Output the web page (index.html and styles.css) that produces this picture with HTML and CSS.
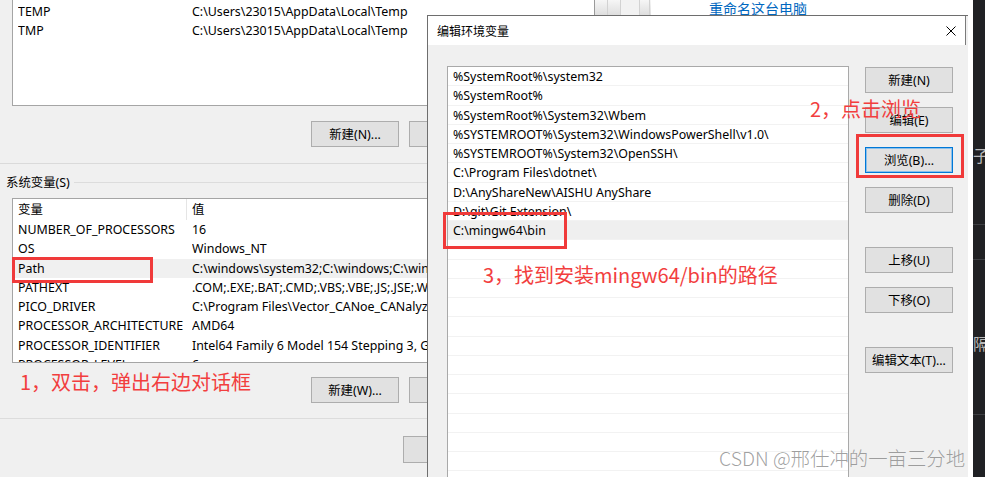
FILE: index.html
```html
<!DOCTYPE html>
<html lang="zh-CN">
<head>
    <meta charset="UTF-8">
    <meta name="viewport" content="width=device-width, initial-scale=1.0">
    <title>编辑环境变量</title>
    <link rel="stylesheet" href="styles.css">
</head>
<body>
    <div class="desktop">
        <div class="settings">
            <div class="chrome-strip">
                <span></span><span></span><span></span><span></span>
            </div>
            <div class="settings-main">
                <a class="settings-link">重命名这台电脑</a>
            </div>
            <div class="dark-pane">
                <div class="dark-text first">子配</div>
                <div class="dark-line first-line"></div>
                <div class="dark-line second-line"></div>
                <div class="dark-text second">隔</div>
                <div class="dark-line third-line"></div>
            </div>
        </div>

        <div class="env-window">
            <div class="list user-list">
                <div class="list-row"><span>TEMP</span><span>C:\Users\23015\AppData\Local\Temp</span></div>
                <div class="list-row"><span>TMP</span><span>C:\Users\23015\AppData\Local\Temp</span></div>
            </div>
            <div class="button-row">
                <button class="btn">新建(N)...</button>
                <button class="btn">编辑(E)...</button>
            </div>
            <div class="divider"></div>
            <div class="group-title">
                <span>系统变量(S)</span>
                <div class="group-line"></div>
            </div>
            <div class="list sys-list">
                <div class="list-head"><span>变量</span><span>值</span></div>
                <div class="list-row"><span>NUMBER_OF_PROCESSORS</span><span>16</span></div>
                <div class="list-row"><span>OS</span><span>Windows_NT</span></div>
                <div class="list-row selected"><span>Path</span><span>C:\windows\system32;C:\windows;C:\windows\System32\Wbem</span></div>
                <div class="list-row"><span>PATHEXT</span><span>.COM;.EXE;.BAT;.CMD;.VBS;.VBE;.JS;.JSE;.WSF;.WSH;.MSC</span></div>
                <div class="list-row"><span>PICO_DRIVER</span><span>C:\Program Files\Vector_CANoe_CANalyzer</span></div>
                <div class="list-row"><span>PROCESSOR_ARCHITECTURE</span><span>AMD64</span></div>
                <div class="list-row"><span>PROCESSOR_IDENTIFIER</span><span>Intel64 Family 6 Model 154 Stepping 3, GenuineIntel</span></div>
                <div class="list-row"><span>PROCESSOR_LEVEL</span><span>6</span></div>
            </div>
            <div class="button-row footer-row">
                <button class="btn">新建(W)...</button>
                <button class="btn">编辑(I)...</button>
            </div>
            <div class="divider bottom-divider"></div>
            <div class="ok-row">
                <button class="btn">确定</button>
            </div>
        </div>

        <div class="edit-dialog">
            <div class="title-bar">
                <span class="title">编辑环境变量</span>
                <svg class="close-icon" width="10" height="10" viewBox="0 0 10 10">
                    <path d="M0.5 0.5L9.5 9.5M9.5 0.5L0.5 9.5" stroke="#000" stroke-width="1"/>
                </svg>
            </div>
            <div class="dialog-body">
                <div class="path-list">
                    <div class="path-row">%SystemRoot%\system32</div>
                    <div class="path-row">%SystemRoot%</div>
                    <div class="path-row">%SystemRoot%\System32\Wbem</div>
                    <div class="path-row">%SYSTEMROOT%\System32\WindowsPowerShell\v1.0\</div>
                    <div class="path-row">%SYSTEMROOT%\System32\OpenSSH\</div>
                    <div class="path-row">C:\Program Files\dotnet\</div>
                    <div class="path-row">D:\AnyShareNew\AISHU AnyShare</div>
                    <div class="path-row">D:\git\Git Extension\</div>
                    <div class="path-row selected">C:\mingw64\bin</div>
                    <div class="path-row"></div>
                    <div class="path-row"></div>
                    <div class="path-row"></div>
                    <div class="path-row"></div>
                    <div class="path-row"></div>
                    <div class="path-row"></div>
                    <div class="path-row"></div>
                    <div class="path-row"></div>
                    <div class="path-row"></div>
                    <div class="path-row"></div>
                    <div class="path-row"></div>
                    <div class="path-row"></div>
                    <div class="path-row"></div>
                </div>
                <div class="side-buttons">
                    <button class="btn">新建(N)</button>
                    <button class="btn">编辑(E)</button>
                    <button class="btn focused">浏览(B)...</button>
                    <button class="btn">删除(D)</button>
                    <button class="btn spaced">上移(U)</button>
                    <button class="btn">下移(O)</button>
                    <button class="btn spaced">编辑文本(T)...</button>
                </div>
            </div>
        </div>

        <div class="mark mark-path"></div>
        <div class="mark mark-browse"></div>
        <div class="mark mark-mingw"></div>
        <div class="note note-one">1，双击，弹出右边对话框</div>
        <div class="note note-two">2，点击浏览</div>
        <div class="note note-three">3，找到安装mingw64/bin的路径</div>
        <div class="watermark">CSDN @邢仕冲的一亩三分地</div>
    </div>
</body>
</html>
```

FILE: styles.css
```css
body {
    margin: 0;
    font-family: "Noto Sans", "Noto Sans CJK SC", sans-serif;
    font-size: 12.4px;
    color: #000000;
    background-color: #ffffff;
}

.desktop {
    position: relative;
    width: 985px;
    height: 477px;
    overflow: hidden;
    background-color: #ffffff;
}

/* settings window behind everything */
.settings {
    position: absolute;
    left: 594px;
    top: 0;
    right: 0;
    bottom: 0;
    display: flex;
}

.chrome-strip {
    width: 56px;
    height: 15px;
    display: flex;
    border-left: 1px solid #9a9a9a;
    background: linear-gradient(to bottom, #f6f6f6, #dedede);
}

.chrome-strip span {
    height: 100%;
    border-right: 1px solid #d2d2d2;
}

.chrome-strip span:nth-child(1) { width: 12px; }
.chrome-strip span:nth-child(2) { width: 12px; }
.chrome-strip span:nth-child(3) { width: 18px; background: #f2f2f2; }
.chrome-strip span:nth-child(4) { width: 9px; }

.settings-main {
    flex: 1;
    padding-left: 58px;
}

.settings-link {
    display: block;
    font-family: "Noto Sans CJK SC", sans-serif;
    font-size: 14px;
    line-height: 17px;
    color: #0067c0;
}

.dark-pane {
    width: 12px;
    background-color: #202124;
    overflow: hidden;
}

.dark-text {
    font-family: "Noto Sans CJK SC", sans-serif;
    font-size: 16px;
    line-height: 20px;
    color: #b9b9b9;
    white-space: nowrap;
}

.dark-text.first {
    margin-top: 145px;
}

.dark-line {
    height: 1px;
    background-color: #3d3f43;
}

.first-line {
    margin-top: 59px;
}

.second-line {
    margin-top: 34px;
}

.dark-text.second {
    margin-top: 73px;
}

.third-line {
    margin-top: 61px;
}

/* environment variables window */
.env-window {
    position: absolute;
    left: 0;
    top: 0;
    width: 594px;
    height: 477px;
    background-color: #f0f0f0;
}

.list {
    margin-left: 12px;
    background-color: #ffffff;
    border: 1px solid #a5a5a5;
    overflow: hidden;
}

.user-list {
    height: 103px;
    border-top: none;
    border-right: none;
    padding-top: 2px;
}

.list-row,
.list-head {
    display: grid;
    grid-template-columns: 174px 1fr;
    padding-left: 5px;
    height: 19.25px;
    line-height: 19.25px;
    white-space: nowrap;
}

.list-row span,
.list-head span {
    overflow: hidden;
}

.list-row.selected {
    background-color: #f0f0f0;
}

.list-head {
    height: 21px;
    line-height: 21px;
}

.list-head span:first-child {
    border-right: 1px solid #e5e5e5;
    margin-right: 5px;
}

.button-row {
    display: flex;
    gap: 10px;
    padding-left: 311px;
    margin-top: 15px;
}

.btn {
    width: 88px;
    height: 26px;
    flex-shrink: 0;
    padding: 0;
    font-family: "Noto Sans", "Noto Sans CJK SC", sans-serif;
    font-size: 12.4px;
    color: #000000;
    background-color: #e1e1e1;
    border: 1px solid #adadad;
}

.btn.focused {
    border-color: #0078d7;
    box-shadow: inset 0 0 0 1px #8cc0ea;
}

.divider {
    height: 1px;
    margin-top: 16px;
    background-color: #dadada;
}

.group-title {
    display: flex;
    align-items: center;
    height: 14px;
    margin-top: 11px;
    padding-left: 6px;
}

.group-line {
    flex: 1;
    height: 1px;
    margin-left: 4px;
    background-color: #dcdcdc;
}

.sys-list {
    height: 163px;
    margin-top: 9px;
}

.footer-row {
    margin-top: 14px;
}

.bottom-divider {
    margin-top: 15px;
    background-color: #dcdcdc;
}

.ok-row {
    padding-left: 403px;
    margin-top: 17px;
}

.ok-row .btn {
    height: 27px;
}

/* the edit dialog on top */
.edit-dialog {
    position: absolute;
    left: 427px;
    top: 15px;
    width: 541px;
    height: 470px;
    border-left: 1px solid #6e6e6e;
    border-top: 1px solid #6e6e6e;
    background-color: #f0f0f0;
    box-sizing: border-box;
}

.title-bar {
    display: flex;
    justify-content: space-between;
    align-items: center;
    height: 29px;
    margin-right: 2px;
    padding: 0 9px 0 9px;
    background-color: #ffffff;
    border-right: 1px solid #7a7a7a;
}

.title {
    font-family: "Noto Sans CJK SC", sans-serif;
    font-size: 12px;
}

.dialog-body {
    display: flex;
    align-items: flex-start;
    padding: 21px 0 0 19px;
}

.path-list {
    width: 402px;
    height: 420px;
    background-color: #ffffff;
    border: 1px solid #a9a9a9;
    border-bottom: none;
    box-sizing: border-box;
    overflow: hidden;
}

.path-row {
    height: 19.25px;
    line-height: 19.25px;
    padding-left: 5px;
    border-bottom: 1px solid #f2f2f2;
    box-sizing: border-box;
    white-space: nowrap;
}

.path-row.selected {
    background-color: #efefef;
}

.side-buttons {
    display: flex;
    flex-direction: column;
    gap: 14px;
    margin-left: 16px;
    padding-top: 1px;
}

.side-buttons .spaced {
    margin-top: 20px;
}

/* red annotations drawn over the screenshot */
.mark {
    position: absolute;
    border: 3px solid #f03a3a;
    box-sizing: border-box;
}

.mark-path {
    left: 12px;
    top: 257px;
    width: 141px;
    height: 26px;
}

.mark-browse {
    left: 856px;
    top: 134px;
    width: 108px;
    height: 44px;
}

.mark-mingw {
    left: 443px;
    top: 212px;
    width: 124px;
    height: 37px;
}

.note {
    position: absolute;
    font-family: "Noto Sans CJK SC", sans-serif;
    font-size: 20px;
    line-height: 24px;
    color: #f23e3e;
    white-space: nowrap;
}

.note-one {
    left: 20px;
    top: 370px;
}

.note-two {
    left: 810px;
    top: 97px;
}

.note-three {
    left: 483px;
    top: 263px;
}

.watermark {
    position: absolute;
    left: 719px;
    top: 446px;
    font-family: "Noto Sans CJK SC", sans-serif;
    font-size: 19.4px;
    font-weight: 300;
    line-height: 24px;
    color: rgba(125, 125, 125, 0.72);
    white-space: nowrap;
}
```
